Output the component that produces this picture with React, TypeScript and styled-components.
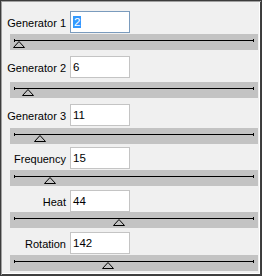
import styled, { createGlobalStyle } from "styled-components";

const GlobalStyle = createGlobalStyle`
  html, body {
    margin: 0;
    padding: 0;
    background: #f0f0f0;
  }
`;

type Setting = {
  label: string;
  value: number;
  max: number;
  top: number;
  gap: number;
  selected?: boolean;
};

const settings: Setting[] = [
  { label: "Generator 1", value: 2, max: 100, top: 10, gap: 1, selected: true },
  { label: "Generator 2", value: 6, max: 100, top: 6, gap: 4 },
  { label: "Generator 3", value: 11, max: 100, top: 6, gap: 2 },
  { label: "Frequency", value: 15, max: 100, top: 3, gap: 1 },
  { label: "Heat", value: 44, max: 100, top: 4, gap: 0 },
  { label: "Rotation", value: 142, max: 360, top: 4, gap: 1 },
];

const TRACK_START = 4;
const TRACK_WIDTH = 239;

const App = () => {
  return (
    <>
      <GlobalStyle />
      <PanelStyled>
        {settings.map((s) => {
          const thumbX = TRACK_START + (s.value / s.max) * TRACK_WIDTH;
          return (
            <SectionStyled key={s.label} $top={s.top}>
              <RowStyled>
                <LabelStyled>{s.label}</LabelStyled>
                <InputBoxStyled $focused={!!s.selected}>
                  {s.selected ? <SelectedStyled>{s.value}</SelectedStyled> : s.value}
                </InputBoxStyled>
              </RowStyled>
              <BandStyled $gap={s.gap}>
                <TrackStyled />
                <ThumbStyled style={{ left: Math.round(thumbX) - 6 }} width="12" height="7" viewBox="0 0 12 7">
                  <polygon points="6,0.5 11.5,6.5 0.5,6.5" fill="#c3c3c3" stroke="#000" strokeWidth="1" />
                </ThumbStyled>
              </BandStyled>
            </SectionStyled>
          );
        })}
      </PanelStyled>
    </>
  );
};

export default App;

const PanelStyled = styled.div`
  box-sizing: border-box;
  width: 262px;
  height: 276px;
  background: #f0f0f0;
  border: 1px solid #3c3c3c;
  box-shadow: inset 1px 1px 0 #a0a0a0, inset -1px -1px 0 #404040, inset -2px -2px 0 #ffffff;
  padding: 0 3px 0 9px;
  overflow: hidden;
  font-family: "Liberation Sans", Arial, sans-serif;
  font-size: 11px;
  color: #000;
`;

const SectionStyled = styled.div<{ $top: number }>`
  margin-top: ${({ $top }) => $top}px;
  display: flex;
  flex-direction: column;
`;

const RowStyled = styled.div`
  display: flex;
  align-items: center;
  height: 22px;
  gap: 4px;
`;

const LabelStyled = styled.span`
  display: flex;
  justify-content: flex-end;
  flex-shrink: 0;
  width: 56px;
  white-space: nowrap;
  font-size: 11px;
  padding-top: 1px;
`;

const InputBoxStyled = styled.div<{ $focused: boolean }>`
  box-sizing: border-box;
  width: 60px;
  height: 22px;
  background: #fff;
  border: 1px solid ${({ $focused }) => ($focused ? "#7a9bbd" : "#c4c4c4")};
  padding: 2px 2px 0 2px;
  font-size: 11.5px;
  line-height: 16px;
`;

const SelectedStyled = styled.span`
  background: #3399ff;
  color: #fff;
  padding: 0 1px;
`;

const BandStyled = styled.div<{ $gap: number }>`
  position: relative;
  margin-top: ${({ $gap }) => $gap}px;
  height: 16px;
  background: #c3c3c3;
`;

const TrackStyled = styled.div`
  position: absolute;
  left: 4px;
  width: 240px;
  top: 6px;
  height: 1px;
  background: #000;

  &::before,
  &::after {
    content: "";
    position: absolute;
    top: -1px;
    width: 1px;
    height: 3px;
    background: #000;
  }
  &::before {
    left: 0;
  }
  &::after {
    right: 0;
  }
`;

const ThumbStyled = styled.svg`
  position: absolute;
  top: 7px;
  display: block;
`;
